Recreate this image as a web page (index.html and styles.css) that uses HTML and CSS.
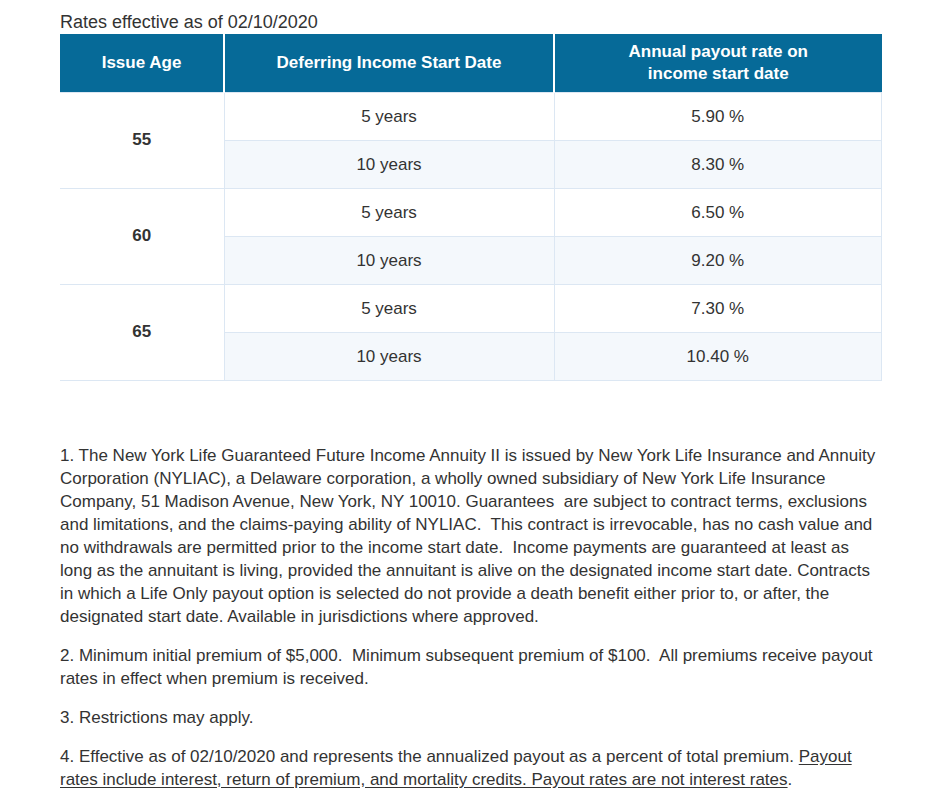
FILE: index.html
```html
<!DOCTYPE html>
<html>
<head>
<meta charset="utf-8">
<link rel="stylesheet" href="styles.css">
</head>
<body>
<div class="page">
  <p class="effective">Rates effective as of 02/10/2020</p>
  <table class="rates">
    <thead>
      <tr>
        <th class="c-age">Issue Age</th>
        <th class="c-date">Deferring Income Start Date</th>
        <th class="c-rate">Annual payout rate on<br>income start date</th>
      </tr>
    </thead>
    <tbody>
      <tr><td class="age" rowspan="2">55</td><td>5 years</td><td>5.90 %</td></tr>
      <tr class="alt"><td>10 years</td><td>8.30 %</td></tr>
      <tr><td class="age" rowspan="2">60</td><td>5 years</td><td>6.50 %</td></tr>
      <tr class="alt"><td>10 years</td><td>9.20 %</td></tr>
      <tr><td class="age" rowspan="2">65</td><td>5 years</td><td>7.30 %</td></tr>
      <tr class="alt"><td>10 years</td><td>10.40 %</td></tr>
    </tbody>
  </table>
  <div class="notes">
    <p>1. The New York Life Guaranteed Future Income Annuity II is issued by New York Life Insurance and Annuity Corporation (NYLIAC), a Delaware corporation, a wholly owned subsidiary of New York Life Insurance Company, 51 Madison Avenue, New York, NY 10010. Guarantees&nbsp; are subject to contract terms, exclusions and limitations, and the claims-paying ability of NYLIAC.&nbsp; This contract is irrevocable, has no cash value and no withdrawals are permitted prior to the income start date.&nbsp; Income payments are guaranteed at least as long as the annuitant is living, provided the annuitant is alive on the designated income start date. Contracts in which a Life Only payout option is selected do not provide a death benefit either prior to, or after, the designated start date. Available in jurisdictions where approved.</p>
    <p>2. Minimum initial premium of $5,000.&nbsp; Minimum subsequent premium of $100.&nbsp; All premiums receive payout rates in effect when premium is received.</p>
    <p>3. Restrictions may apply.</p>
    <p>4. Effective as of 02/10/2020 and represents the annualized payout as a percent of total premium. <u>Payout rates include interest, return of premium, and mortality credits. Payout rates are not interest rates</u>.</p>
  </div>
</div>
</body>
</html>
```

FILE: styles.css
```css
html, body {
  margin: 0;
  padding: 0;
  background: #ffffff;
}

body {
  font-family: "Helvetica Neue", "Liberation Sans", Arial, sans-serif;
  font-size: 17px;
  color: #333333;
}

.page {
  width: 822px;
  padding: 12px 0 0 60px;
}

.effective {
  margin: 0 0 2px;
  font-size: 18px;
  line-height: 20px;
}

.rates {
  width: 822px;
  border-collapse: collapse;
  table-layout: fixed;
}

.rates th {
  background: #066a98;
  color: #ffffff;
  font-weight: bold;
  line-height: 22px;
  height: 58px;
  padding: 0 8px;
  text-align: center;
  vertical-align: middle;
  border-left: 2px solid #ffffff;
  box-sizing: border-box;
}

.rates th:first-child {
  border-left: none;
}

.c-age { width: 164px; }
.c-date { width: 330px; }

.rates td {
  height: 48px;
  padding: 2px 8px 0;
  text-align: center;
  vertical-align: middle;
  border: 1px solid #dce7f3;
  box-sizing: border-box;
  line-height: 20px;
}

.rates td.age {
  font-weight: bold;
  border-left: none;
  background: #ffffff;
  padding-top: 0;
}

.rates tr.alt td {
  background: #f4f8fc;
}

.notes {
  margin-top: 63px;
  width: 822px;
}

.notes p {
  margin: 0 0 16px;
  line-height: 23px;
}

.notes u {
  text-decoration: underline;
  text-underline-offset: 2px;
}
```
